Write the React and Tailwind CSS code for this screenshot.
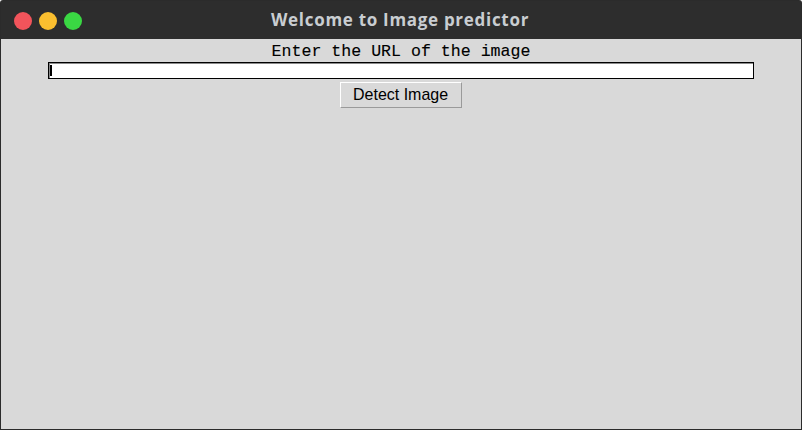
import React from "react";

export default function App() {
  return (
    <div className="w-[802px] h-[430px] bg-[#2b2b2b] p-px flex flex-col overflow-hidden rounded-tl-[3px] rounded-tr-[3px]">
      <div className="h-[38px] shrink-0 bg-[#2d2d2d] relative flex items-center justify-center">
        <div className="absolute left-[13px] top-[11px] flex gap-[7px]">
          <div className="w-[18px] h-[18px] rounded-full bg-[#f2545b]" />
          <div className="w-[18px] h-[18px] rounded-full bg-[#fbbf2f]" />
          <div className="w-[18px] h-[18px] rounded-full bg-[#3ad843]" />
        </div>
        <span className="text-[#c9cdd1] font-bold text-[17px] tracking-[0.7px] -translate-x-[1px]" style={{ fontFamily: '"Open Sans", "Liberation Sans", sans-serif' }}>
          Welcome to Image predictor
        </span>
      </div>
      <div className="flex-1 bg-[#d9d9d9] flex flex-col items-center">
        <div className="mt-[3px] h-[20px] leading-[20px] text-[16.6px] text-black" style={{ fontFamily: '"Liberation Mono", monospace', WebkitTextStroke: "0.12px black" }}>
          Enter the URL of the image
        </div>
        <div className="w-[706px] h-[17px] border border-black bg-white relative">
          <div className="absolute left-0 top-0 right-0 h-px bg-[#8a8a8a]" />
          <div className="absolute left-0 top-0 bottom-0 w-px bg-[#8a8a8a]" />
          <div className="absolute left-[1px] top-[2px] w-[2px] h-[11px] bg-black" />
        </div>
        <div className="mt-[3px] w-[122px] h-[26px] bg-[#d9d9d9] border-t border-l border-t-white border-l-white border-b border-r border-b-[#9a9a9a] border-r-[#9a9a9a] flex items-center justify-center">
          <span className="text-[17px] text-black inline-block" style={{ fontFamily: '"Liberation Sans", sans-serif', fontWeight: 400, transform: "scaleX(0.94)" }}>
            Detect Image
          </span>
        </div>
      </div>
    </div>
  );
}
